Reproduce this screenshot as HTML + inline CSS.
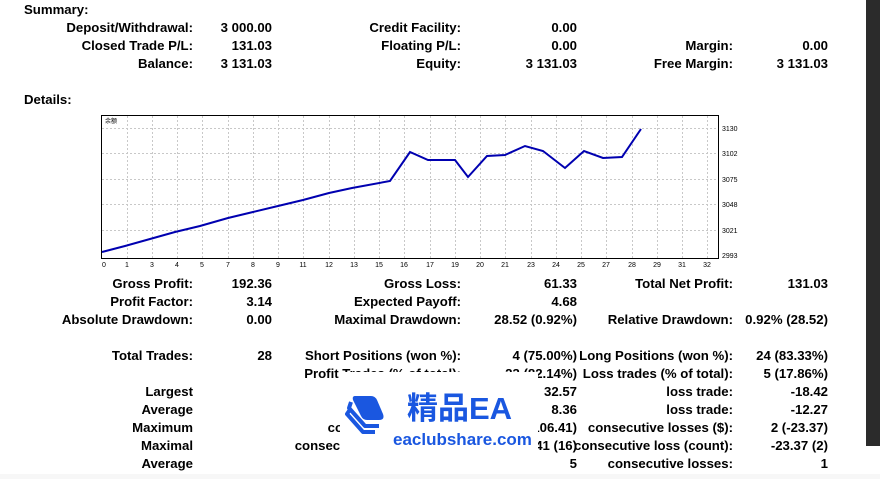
<!DOCTYPE html>
<html><head><meta charset="utf-8"><style>
body{margin:0;width:880px;height:479px;background:#fff;overflow:hidden;position:relative;font-family:"Liberation Sans",sans-serif;font-weight:bold;font-size:13.2px;color:#000}
.t{position:absolute;white-space:nowrap;line-height:14px}
.r{text-align:right}
</style></head><body>
<div style="position:absolute;left:866px;top:0;width:14px;height:446px;background:#2b2b2b"></div>
<div style="position:absolute;left:0;top:474px;width:880px;height:5px;background:#f7f7f7"></div>

<div class="t" style="left:24px;top:3px">Summary:</div>
<div class="t" style="left:24px;top:93px">Details:</div>

<div id="rows"></div>

<svg style="position:absolute;left:0;top:0" width="880" height="479">
<g stroke="#c8c8c8" stroke-dasharray="2,2" stroke-width="1">
<line x1="127.5" y1="116" x2="127.5" y2="258"/><line x1="152.5" y1="116" x2="152.5" y2="258"/><line x1="177.5" y1="116" x2="177.5" y2="258"/><line x1="202.5" y1="116" x2="202.5" y2="258"/><line x1="228.5" y1="116" x2="228.5" y2="258"/><line x1="253.5" y1="116" x2="253.5" y2="258"/><line x1="278.5" y1="116" x2="278.5" y2="258"/><line x1="303.5" y1="116" x2="303.5" y2="258"/><line x1="329.5" y1="116" x2="329.5" y2="258"/><line x1="354.5" y1="116" x2="354.5" y2="258"/><line x1="379.5" y1="116" x2="379.5" y2="258"/><line x1="404.5" y1="116" x2="404.5" y2="258"/><line x1="430.5" y1="116" x2="430.5" y2="258"/><line x1="455.5" y1="116" x2="455.5" y2="258"/><line x1="480.5" y1="116" x2="480.5" y2="258"/><line x1="505.5" y1="116" x2="505.5" y2="258"/><line x1="531.5" y1="116" x2="531.5" y2="258"/><line x1="556.5" y1="116" x2="556.5" y2="258"/><line x1="581.5" y1="116" x2="581.5" y2="258"/><line x1="606.5" y1="116" x2="606.5" y2="258"/><line x1="632.5" y1="116" x2="632.5" y2="258"/><line x1="657.5" y1="116" x2="657.5" y2="258"/><line x1="682.5" y1="116" x2="682.5" y2="258"/><line x1="707.5" y1="116" x2="707.5" y2="258"/>
<line x1="102" y1="128.5" x2="718" y2="128.5"/><line x1="102" y1="153.5" x2="718" y2="153.5"/><line x1="102" y1="179.5" x2="718" y2="179.5"/><line x1="102" y1="204.5" x2="718" y2="204.5"/><line x1="102" y1="230.5" x2="718" y2="230.5"/>
</g>
<rect x="101.5" y="115.5" width="617" height="143" fill="none" stroke="#000"/>
<polyline fill="none" stroke="#0000b0" stroke-width="2" points="102,252 125,246 150,239 175,232 200,226 228,218 253,212 278,206 303,200 329,193 352,188 390,181 410,152 428,160 455,160 468,177 487,156 505,155 525,146 543,151 565,168 584,151 603,158 622,157 641,129"/>
<g font-family="Liberation Sans,sans-serif" font-weight="normal" font-size="7" fill="#000">
<text x="722" y="131">3130</text><text x="722" y="156">3102</text><text x="722" y="182">3075</text><text x="722" y="207">3048</text><text x="722" y="233">3021</text><text x="722" y="258">2993</text>
<text x="105" y="123" font-size="6">余额</text>
</g>
<g font-family="Liberation Sans,sans-serif" font-weight="normal" font-size="7" fill="#000" text-anchor="middle">
<text x="104" y="267">0</text><text x="127" y="267">1</text><text x="152" y="267">3</text><text x="177" y="267">4</text><text x="202" y="267">5</text><text x="228" y="267">7</text><text x="253" y="267">8</text><text x="278" y="267">9</text><text x="303" y="267">11</text><text x="329" y="267">12</text><text x="354" y="267">13</text><text x="379" y="267">15</text><text x="404" y="267">16</text><text x="430" y="267">17</text><text x="455" y="267">19</text><text x="480" y="267">20</text><text x="505" y="267">21</text><text x="531" y="267">23</text><text x="556" y="267">24</text><text x="581" y="267">25</text><text x="606" y="267">27</text><text x="632" y="267">28</text><text x="657" y="267">29</text><text x="682" y="267">31</text><text x="707" y="267">32</text>
</g>
</svg>

<script>
var R=[
[28,193,"Deposit/Withdrawal:"],[28,272,"3 000.00"],[28,461,"Credit Facility:"],[28,577,"0.00"],
[46,193,"Closed Trade P/L:"],[46,272,"131.03"],[46,461,"Floating P/L:"],[46,577,"0.00"],[46,733,"Margin:"],[46,828,"0.00"],
[64,193,"Balance:"],[64,272,"3 131.03"],[64,461,"Equity:"],[64,577,"3 131.03"],[64,733,"Free Margin:"],[64,828,"3 131.03"],
[284,193,"Gross Profit:"],[284,272,"192.36"],[284,461,"Gross Loss:"],[284,577,"61.33"],[284,733,"Total Net Profit:"],[284,828,"131.03"],
[302,193,"Profit Factor:"],[302,272,"3.14"],[302,461,"Expected Payoff:"],[302,577,"4.68"],
[320,193,"Absolute Drawdown:"],[320,272,"0.00"],[320,461,"Maximal Drawdown:"],[320,577,"28.52 (0.92%)"],[320,733,"Relative Drawdown:"],[320,828,"0.92% (28.52)"],
[356,193,"Total Trades:"],[356,272,"28"],[356,461,"Short Positions (won %):"],[356,577,"4 (75.00%)"],[356,733,"Long Positions (won %):"],[356,828,"24 (83.33%)"],
[374,461,"Profit Trades (% of total):"],[374,577,"23 (82.14%)"],[374,733,"Loss trades (% of total):"],[374,828,"5 (17.86%)"],
[392,193,"Largest"],[392,461,"profit trade:"],[392,577,"32.57"],[392,733,"loss trade:"],[392,828,"-18.42"],
[410,193,"Average"],[410,461,"profit trade:"],[410,577,"8.36"],[410,733,"loss trade:"],[410,828,"-12.27"],
[428,193,"Maximum"],[428,461,"consecutive wins ($):"],[428,577,"16 (106.41)"],[428,733,"consecutive losses ($):"],[428,828,"2 (-23.37)"],
[446,193,"Maximal"],[446,461,"consecutive profit (count):"],[446,577,"106.41 (16)"],[446,733,"consecutive loss (count):"],[446,828,"-23.37 (2)"],
[464,193,"Average"],[464,461,"consecutive wins:"],[464,577,"5"],[464,733,"consecutive losses:"],[464,828,"1"]];
var h="";R.forEach(function(a){h+='<div class="t r" style="right:'+(880-a[1])+'px;top:'+(a[0]-7)+'px">'+a[2]+'</div>';});
document.getElementById("rows").outerHTML=h;
</script>

<div style="position:absolute;left:340px;top:372px;width:198px;height:99px;background:#fff"></div>
<svg style="position:absolute;left:345px;top:394px" width="42" height="42" viewBox="0 0 42 42">
<path d="M6 14 L2 20 L18 38 L30 38" fill="none" stroke="#1a57e0" stroke-width="4" stroke-linejoin="round"/>
<path d="M6 8 L4 14 L20 32 L34 32" fill="none" stroke="#1a57e0" stroke-width="4" stroke-linejoin="round"/>
<path d="M10 2 L26 2 Q30 2 32 6 L38 20 Q40 26 34 26 L22 26 Q18 26 16 22 L8 6 Q7 2 10 2Z" fill="#1a57e0"/>
</svg>
<div class="t" style="left:407px;top:391px;font-size:31px;line-height:36px;color:#1a57e0;font-family:'Liberation Sans','Noto Sans CJK SC',sans-serif">精品EA</div>
<div class="t" style="left:393px;top:430px;font-size:17px;line-height:20px;color:#1a57e0;font-family:'Liberation Sans',sans-serif">eaclubshare.com</div>
</body></html>
